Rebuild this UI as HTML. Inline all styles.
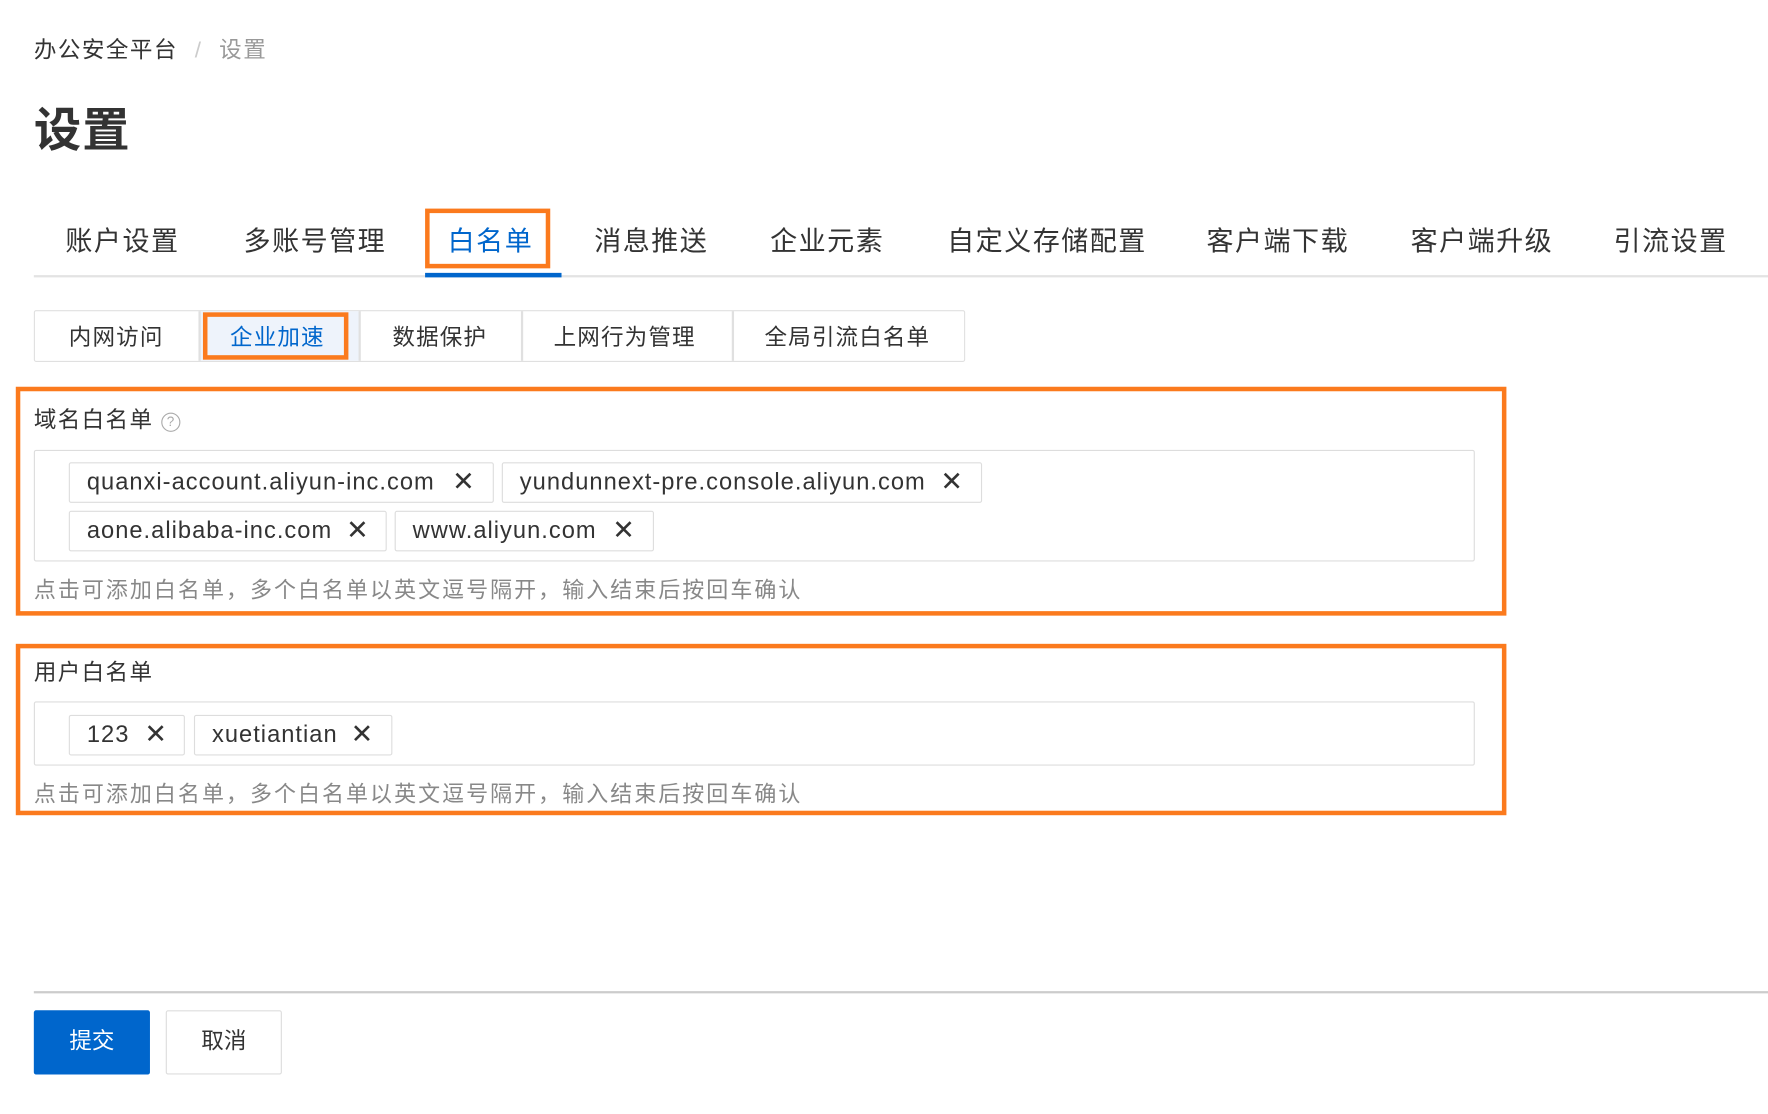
<!DOCTYPE html>
<html><head><meta charset="utf-8"><style>
html,body{margin:0;padding:0;background:#fff;width:1768px;height:1114px;overflow:hidden}
#w{position:absolute;left:0;top:0;width:1568px;height:988px;transform:scale(1.12755);transform-origin:0 0;font-family:"Liberation Sans","Noto Sans CJK SC",sans-serif;color:#333}
.a{position:absolute;white-space:nowrap}
.ob{position:absolute;border:4px solid #fb7a1d;box-sizing:border-box}
.tag{position:absolute;height:36px;border:1px solid #ddd;border-radius:2px;box-sizing:border-box;font-size:21px;letter-spacing:0.9px;line-height:34px;padding-left:15px;color:#333;background:#fff}
.tag i{position:absolute;top:0;font-style:normal;font-size:24px;letter-spacing:0}
.inp{position:absolute;border:1.5px solid #ddd;border-radius:2px;box-sizing:border-box}
.help{position:absolute;font-size:19.5px;letter-spacing:1.8px;color:#888;white-space:nowrap}
</style></head><body><div id="w">
<div class="a" style="left:30px;top:28px;font-size:20px;color:#333;letter-spacing:1.3px">办公安全平台 <span style="color:#ccc;margin:0 8px">/</span> <span style="color:#999">设置</span></div>
<div class="a" style="left:30px;top:82px;font-size:42px;font-weight:bold;color:#333;letter-spacing:1px">设置</div>
<div class="a" style="left:30px;top:244px;width:1538px;height:2px;background:#e3e3e3"></div>
<div class="a" style="left:377px;top:242px;width:121px;height:4px;background:#0066cc"></div>
<div class="a" style="top:194px;left:0;font-size:24px;color:#333;letter-spacing:1.3px">
<span class="a" style="left:58px">账户设置</span><span class="a" style="left:216px">多账号管理</span><span class="a" style="left:397px;color:#0066cc">白名单</span><span class="a" style="left:527px">消息推送</span><span class="a" style="left:683px">企业元素</span><span class="a" style="left:840px">自定义存储配置</span><span class="a" style="left:1070px">客户端下载</span><span class="a" style="left:1251px">客户端升级</span><span class="a" style="left:1431px">引流设置</span></div>
<div class="ob" style="left:377px;top:185px;width:111px;height:53px"></div>
<div class="a" style="left:30px;top:275px;width:826px;height:46px;border:1.5px solid #e0e0e0;box-sizing:border-box;border-radius:2px"></div>
<div class="a" style="left:176px;top:276px;width:142px;height:44px;background:#eef3fb"></div>
<div class="a" style="left:176px;top:276px;width:1.5px;height:44px;background:#e0e0e0"></div>
<div class="a" style="left:318px;top:276px;width:1.5px;height:44px;background:#e0e0e0"></div>
<div class="a" style="left:462px;top:276px;width:1.5px;height:44px;background:#e0e0e0"></div>
<div class="a" style="left:649px;top:276px;width:1.5px;height:44px;background:#e0e0e0"></div>
<div class="a" style="top:283px;left:0;font-size:20px;color:#333;letter-spacing:1px">
<span class="a" style="left:61px">内网访问</span><span class="a" style="left:204px;color:#0066cc">企业加速</span><span class="a" style="left:348px">数据保护</span><span class="a" style="left:491px">上网行为管理</span><span class="a" style="left:678px">全局引流白名单</span></div>
<div class="ob" style="left:180px;top:277px;width:129px;height:42px"></div>

<div class="ob" style="left:14px;top:343px;width:1322px;height:203px"></div>
<div class="a" style="left:30px;top:356px;font-size:20px;color:#333;letter-spacing:1.2px">域名白名单 <span style="display:inline-block;width:15px;height:15px;border:1.3px solid #aaa;border-radius:50%;font-size:12px;line-height:15px;text-align:center;color:#aaa;vertical-align:1px;letter-spacing:0">?</span></div>
<div class="inp" style="left:30px;top:399px;width:1278px;height:99px"></div>
<div class="tag" style="left:61px;top:410px;width:377px">quanxi-account.aliyun-inc.com<i style="left:339px">✕</i></div>
<div class="tag" style="left:445px;top:410px;width:426px">yundunnext-pre.console.aliyun.com<i style="left:388px">✕</i></div>
<div class="tag" style="left:61px;top:453px;width:282px">aone.alibaba-inc.com<i style="left:245px">✕</i></div>
<div class="tag" style="left:350px;top:453px;width:230px">www.aliyun.com<i style="left:192px">✕</i></div>
<div class="help" style="left:30px;top:507px">点击可添加白名单，多个白名单以英文逗号隔开，输入结束后按回车确认</div>

<div class="ob" style="left:14px;top:571px;width:1322px;height:152px"></div>
<div class="a" style="left:30px;top:580px;font-size:20px;color:#333;letter-spacing:1.2px">用户白名单</div>
<div class="inp" style="left:30px;top:622px;width:1278px;height:57px"></div>
<div class="tag" style="left:61px;top:634px;width:103px">123<i style="left:66px">✕</i></div>
<div class="tag" style="left:172px;top:634px;width:176px">xuetiantian<i style="left:138px">✕</i></div>
<div class="help" style="left:30px;top:688px">点击可添加白名单，多个白名单以英文逗号隔开，输入结束后按回车确认</div>

<div class="a" style="left:30px;top:879px;width:1538px;height:2px;background:#ccc"></div>
<div class="a" style="left:30px;top:896px;width:103px;height:57px;background:#0066cc;border-radius:2px;color:#fff;font-size:20px;line-height:57px;text-align:center">提交</div>
<div class="a" style="left:147px;top:896px;width:103px;height:57px;border:1.5px solid #ddd;box-sizing:border-box;border-radius:2px;color:#333;font-size:20px;line-height:54px;text-align:center">取消</div>
</div></body></html>
